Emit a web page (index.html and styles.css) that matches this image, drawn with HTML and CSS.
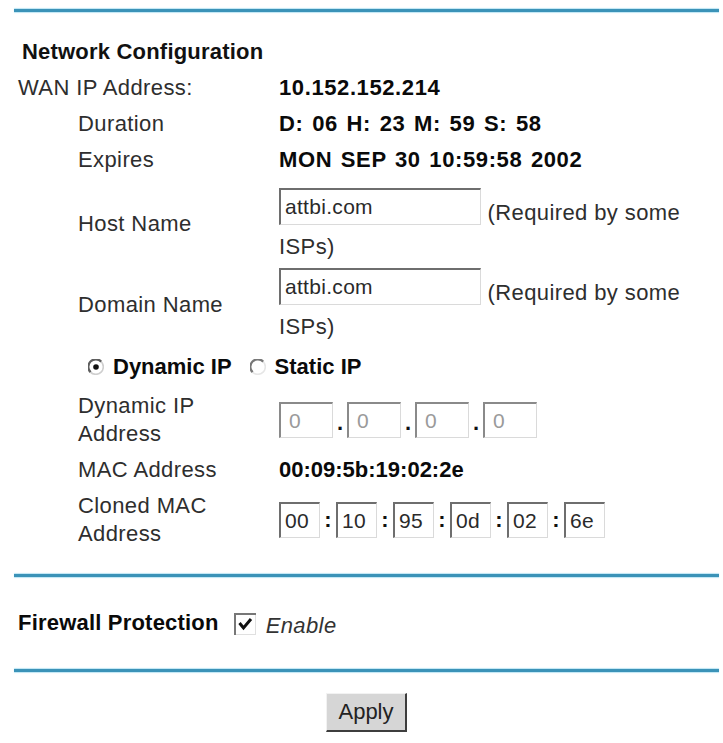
FILE: index.html
```html
<!DOCTYPE html>
<html>
<head>
<meta charset="utf-8">
<link rel="stylesheet" href="styles.css">
</head>
<body>
<div class="page">
  <div class="rule rule-top"></div>
  <div class="form">
    <div class="heading">Network Configuration</div>
    <div class="row"><div class="label">WAN IP Address:</div><div class="value strong">10.152.152.214</div></div>
    <div class="row"><div class="label indent">Duration</div><div class="value strong">D: 06 H: 23 M: 59 S: 58</div></div>
    <div class="row"><div class="label indent">Expires</div><div class="value strong">MON SEP 30 10:59:58 2002</div></div>
    <div class="row row-host"><div class="label indent">Host Name</div><div class="value field"><input class="text" type="text" value="attbi.com"> (Required by some ISPs)</div></div>
    <div class="row row-domain"><div class="label indent">Domain Name</div><div class="value field"><input class="text" type="text" value="attbi.com"> (Required by some ISPs)</div></div>
    <div class="row row-radio">
      <div class="radios">
        <span class="radio-item"><svg class="radio" viewBox="0 0 16 16" width="16" height="16"><circle cx="8" cy="8" r="7.5" fill="#fff"/><path d="M13.3 2.7 A7.5 7.5 0 1 0 2.7 13.3" fill="none" stroke="#5e5e5e" stroke-width="2.2"/><path d="M2.7 13.3 A7.5 7.5 0 0 0 13.3 2.7" fill="none" stroke="#cfcfcf" stroke-width="1.6"/><circle cx="8" cy="8" r="2.8" fill="#111"/></svg><b>Dynamic IP</b></span>
        <span class="radio-item"><svg class="radio" viewBox="0 0 16 16" width="16" height="16"><circle cx="8" cy="8" r="7.5" fill="#fff"/><path d="M13.3 2.7 A7.5 7.5 0 1 0 2.7 13.3" fill="none" stroke="#777" stroke-width="2.2"/><path d="M2.7 13.3 A7.5 7.5 0 0 0 13.3 2.7" fill="none" stroke="#e6e6e6" stroke-width="1.6"/></svg><b>Static IP</b></span>
      </div>
    </div>
    <div class="row row-tall"><div class="label indent two">Dynamic IP<br>Address</div>
      <div class="value boxes">
        <input class="ip" type="text" value="0" disabled><span class="sep">.</span><input class="ip" type="text" value="0" disabled><span class="sep">.</span><input class="ip" type="text" value="0" disabled><span class="sep">.</span><input class="ip" type="text" value="0" disabled>
      </div>
    </div>
    <div class="row row-mac"><div class="label indent">MAC Address</div><div class="value strong mac-value">00:09:5b:19:02:2e</div></div>
    <div class="row row-tall"><div class="label indent two">Cloned MAC<br>Address</div>
      <div class="value boxes">
        <input class="mac" type="text" value="00"><span class="sep colon">:</span><input class="mac" type="text" value="10"><span class="sep colon">:</span><input class="mac" type="text" value="95"><span class="sep colon">:</span><input class="mac" type="text" value="0d"><span class="sep colon">:</span><input class="mac" type="text" value="02"><span class="sep colon">:</span><input class="mac" type="text" value="6e">
      </div>
    </div>
  </div>
  <div class="rule rule-mid"></div>
  <div class="firewall">
    <b class="fw-label">Firewall Protection</b>
    <svg class="check" viewBox="0 0 22 22" width="22" height="22"><rect x="0" y="0" width="22" height="22" fill="#777"/><rect x="2" y="2" width="20" height="20" fill="#e0e0e0"/><rect x="2" y="2" width="19" height="19" fill="#fff"/><polyline points="5.5,10 9.5,15 17,6" fill="none" stroke="#111" stroke-width="3"/></svg>
    <i class="enable">Enable</i>
  </div>
  <div class="rule rule-bottom"></div>
  <div class="actions"><button class="apply" type="button">Apply</button></div>
</div>
</body>
</html>
```
FILE: styles.css
```css
html, body {
  margin: 0;
  padding: 0;
  background: #fff;
}
body {
  font-family: "Liberation Sans", Arial, sans-serif;
  font-size: 22px;
  letter-spacing: 0.4px;
  color: #2e2e2e;
}
.page {
  width: 723px;
  padding-top: 9px;
}
.rule {
  height: 3px;
  margin: 0 4px 0 14px;
  background: #3b93b8;
  box-shadow: 0 -1px 1px #bfe6f4, 0 1px 1px #bfe6f4;
}
.form {
  margin-top: 21px;
  padding-left: 18px;
}
.heading {
  height: 37px;
  line-height: 37px;
  padding-left: 4px;
  font-weight: bold;
  letter-spacing: 0.2px;
  color: #111;
}
.row {
  display: grid;
  grid-template-columns: 261px 420px;
  align-items: center;
  min-height: 36px;
}
.label {
  line-height: 36px;
}
.label.indent {
  padding-left: 60px;
}
.label.two {
  line-height: 28px;
}
.value.strong {
  font-weight: bold;
  letter-spacing: 0.6px;
  word-spacing: 2px;
  color: #0a0a0a;
}
.value.mac-value {
  letter-spacing: 0;
}
.row-host {
  height: 82px;
}
.row-domain {
  height: 82px;
}
.row-host .label, .row-domain .label {
  padding-top: 6px;
}
.field {
  align-self: start;
  padding-top: 10px;
  line-height: 34px;
}
.row-domain .field {
  padding-top: 8px;
}
input {
  font-family: "Liberation Sans", Arial, sans-serif;
  font-size: 21px;
  letter-spacing: 0.3px;
  box-sizing: border-box;
  margin: 0;
  background: #fff;
  border-top: 2px solid #6e6e6e;
  border-left: 2px solid #6e6e6e;
  border-right: 1px solid #dadada;
  border-bottom: 1px solid #dadada;
  outline: none;
  color: #2a2a2a;
}
.text {
  width: 202px;
  height: 37px;
  padding: 0 4px;
  vertical-align: 6px;
}
.row-radio {
  height: 50px;
  display: flex;
  align-items: center;
}
.radios {
  display: flex;
  align-items: center;
  padding-left: 70px;
}
.radio-item {
  display: flex;
  align-items: center;
}
.radio-item + .radio-item {
  margin-left: 18px;
}
.radio {
  margin-right: 9px;
}
.radio-item b {
  color: #0a0a0a;
  letter-spacing: 0;
}
.boxes {
  display: flex;
  align-items: center;
}
.ip {
  width: 54px;
  height: 36px;
  padding: 0 8px;
  color: #9a9a9a;
  border-top-color: #8a8a8a;
  border-left-color: #8a8a8a;
}
.mac {
  width: 41px;
  height: 36px;
  padding: 0 4px;
}
.sep {
  width: 14px;
  text-align: center;
  font-weight: bold;
  color: #111;
  align-self: flex-end;
  line-height: 30px;
  letter-spacing: 0;
}
.sep.colon {
  width: 16px;
  align-self: center;
  line-height: 36px;
}
.row-mac {
  height: 44px;
}
.row-tall {
  min-height: 56px;
}
.rule-mid {
  margin-top: 26px;
}
.firewall {
  display: flex;
  align-items: center;
  height: 46px;
  margin-top: 23px;
  padding-left: 18px;
}
.fw-label {
  color: #0a0a0a;
  letter-spacing: 0.2px;
}
.check {
  margin-left: 15px;
  margin-top: 2px;
}
.enable {
  margin-left: 10px;
  margin-top: 6px;
  color: #333;
}
.rule-bottom {
  margin-top: 23px;
}
.actions {
  display: flex;
  justify-content: center;
  margin: 21px 4px 0 14px;
}
.apply {
  width: 81px;
  height: 39px;
  padding: 0;
  font-family: "Liberation Sans", Arial, sans-serif;
  font-size: 22px;
  color: #222;
  background: #d6d6d6;
  border-top: 1px solid #f2f2f2;
  border-left: 1px solid #f2f2f2;
  border-right: 2px solid #3e3e3e;
  border-bottom: 2px solid #3e3e3e;
}
```
